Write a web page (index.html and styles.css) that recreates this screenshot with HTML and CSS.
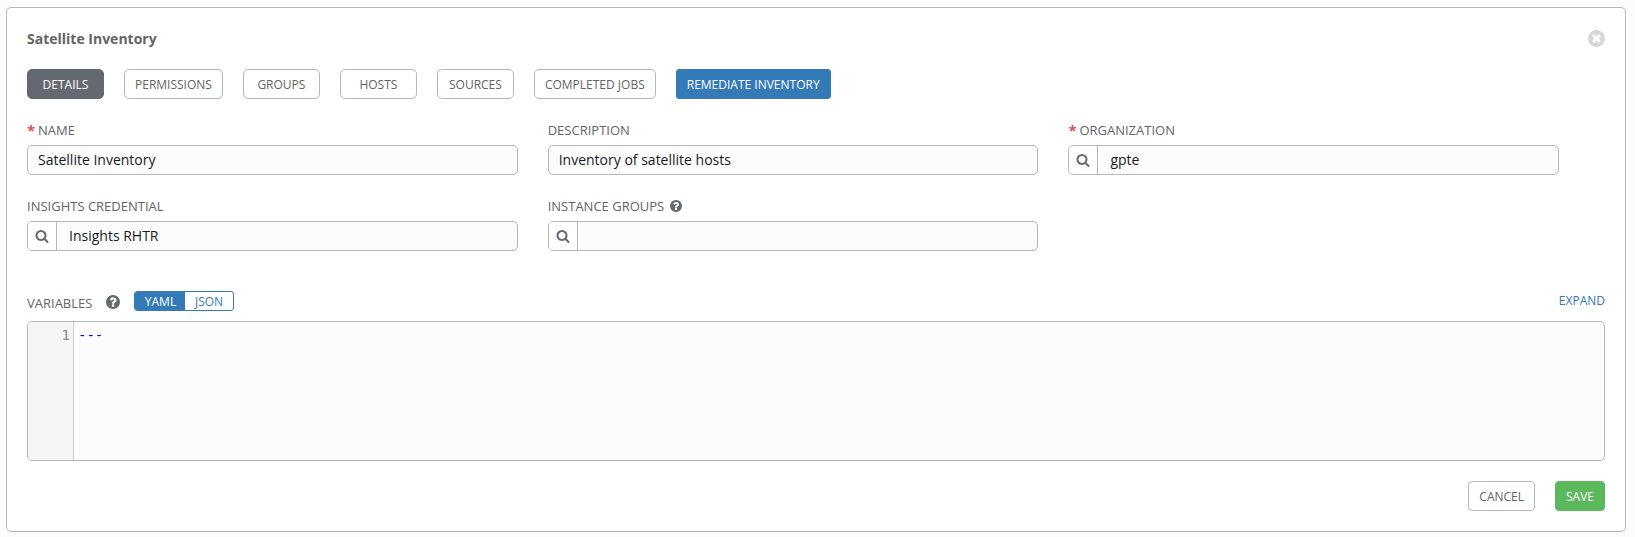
FILE: index.html
```
<!DOCTYPE html>
<html lang="en">
<head>
<meta charset="utf-8">
<title>Satellite Inventory</title>
<link rel="stylesheet" href="styles.css">
</head>
<body>
<svg class="sprite" aria-hidden="true">
  <symbol id="search" viewBox="0 0 1792 1792"><path d="M1216 832q0-185-131.500-316.500t-316.500-131.500-316.500 131.500-131.500 316.500 131.500 316.500 316.500 131.500 316.500-131.500 131.500-316.500zm512 832q0 52-38 90t-90 38q-54 0-90-38l-343-342q-179 124-399 124-143 0-273.500-55.500t-225-150-150-225-55.500-273.500 55.500-273.500 150-225 225-150 273.500-55.500 273.500 55.500 225 150 150 225 55.500 273.500q0 220-124 399l343 343q37 37 37 90z"/></symbol>
  <symbol id="help" viewBox="128 128 1536 1536"><path d="M1024 1376v-192q0-14-9-23t-23-9h-192q-14 0-23 9t-9 23v192q0 14 9 23t23 9h192q14 0 23-9t9-23zm256-672q0-88-55.500-163t-138.500-116-170-41q-243 0-371 213-15 24 8 42l132 100q7 6 19 6 16 0 25-12 53-68 86-92 34-24 86-24 48 0 85.500 26t37.500 59q0 38-20 61t-68 45q-63 28-115.500 86.500t-52.500 125.500v36q0 14 9 23t23 9h192q14 0 23-9t9-23q0-19 21.500-49.500t54.500-49.500q32-18 49-28.500t46-35 44.500-48 28-60.500 12.500-81zm384 192q0 209-103 385.500t-279.500 279.500-385.500 103-385.500-103-279.500-279.500-103-385.500 103-385.500 279.500-279.500 385.500-103 385.500 103 279.500 279.500 103 385.500z"/></symbol>
  <symbol id="close" viewBox="128 128 1536 1536"><path d="M1277 1122q0-26-19-45l-181-181 181-181q19-19 19-45 0-27-19-46l-90-90q-19-19-46-19-26 0-45 19l-181 181-181-181q-19-19-45-19-27 0-46 19l-90 90q-19 19-19 46 0 26 19 45l181 181-181 181q-19 19-19 45 0 27 19 46l90 90q19 19 46 19 26 0 45-19l181-181 181 181q19 19 45 19 27 0 46-19l90-90q19-19 19-46zm387-226q0 209-103 385.500t-279.500 279.500-385.500 103-385.500-103-279.500-279.500-103-385.500 103-385.500 279.500-279.500 385.500-103 385.500 103 279.500 279.500 103 385.500z"/></symbol>
</svg>
<main class="panel">
  <header class="header">
    <h1 class="title">Satellite Inventory</h1>
    <svg class="close"><use href="#close"/></svg>
  </header>
  <nav class="tabs">
    <button class="btn tab active">DETAILS</button>
    <button class="btn tab">PERMISSIONS</button>
    <button class="btn tab">GROUPS</button>
    <button class="btn tab">HOSTS</button>
    <button class="btn tab">SOURCES</button>
    <button class="btn tab">COMPLETED JOBS</button>
    <button class="btn remediate">REMEDIATE INVENTORY</button>
  </nav>
  <section class="form">
    <div class="field">
      <div class="label"><span class="required">*</span>NAME</div>
      <div class="input"><span class="value">Satellite Inventory</span></div>
    </div>
    <div class="field">
      <div class="label">DESCRIPTION</div>
      <div class="input"><span class="value">Inventory of satellite hosts</span></div>
    </div>
    <div class="field">
      <div class="label"><span class="required">*</span>ORGANIZATION</div>
      <div class="input"><span class="lookup"><svg class="search"><use href="#search"/></svg></span><span class="value indent">gpte</span></div>
    </div>
    <div class="field">
      <div class="label">INSIGHTS CREDENTIAL</div>
      <div class="input"><span class="lookup"><svg class="search"><use href="#search"/></svg></span><span class="value indent">Insights RHTR</span></div>
    </div>
    <div class="field">
      <div class="label">INSTANCE GROUPS<svg class="help small"><use href="#help"/></svg></div>
      <div class="input"><span class="lookup"><svg class="search"><use href="#search"/></svg></span></div>
    </div>
  </section>
  <div class="variables">
    <span class="variables-label">VARIABLES</span>
    <svg class="help"><use href="#help"/></svg>
    <div class="toggle"><span class="option on">YAML</span><span class="option">JSON</span></div>
    <a class="expand">EXPAND</a>
  </div>
  <div class="editor">
    <div class="gutter">1</div>
    <div class="code">---</div>
  </div>
  <footer class="actions">
    <button class="btn cancel">CANCEL</button>
    <button class="btn save">SAVE</button>
  </footer>
</main>
</body>
</html>
```
FILE: styles.css
```
* { box-sizing: border-box; }
body {
  margin: 0;
  padding: 7px 9px 5px 6px;
  background: #fcfcfc;
  font-family: "Open Sans", "Noto Sans", sans-serif;
  font-size: 14px;
  color: #161b1f;
}
.sprite { display: none; }
.panel {
  height: 525px;
  padding: 19px 20px;
  background: #fff;
  border: 1px solid #b7b7b7;
  border-radius: 5px;
}
.header {
  display: flex;
  justify-content: space-between;
  align-items: center;
  height: 24px;
}
.title {
  margin: 0;
  font-size: 14px;
  line-height: 20px;
  font-weight: 700;
  color: #646464;
}
.close { width: 17px; height: 17px; margin-bottom: 1px; fill: #d7d7d7; }
.tabs { display: flex; gap: 20px; margin-top: 18px; }
.btn {
  height: 30px;
  padding: 2px 10px 0;
  border: 1px solid #b7b7b7;
  border-radius: 5px;
  background: #fff;
  color: #646464;
  font-family: inherit;
  font-size: 12px;
  line-height: 26px;
  white-space: nowrap;
}
.tab { min-width: 77px; }
.active { background: #646972; border-color: #646972; color: #fff; }
.remediate { background: #337ab7; border-color: #337ab7; color: #fff; border-radius: 3px; }
.form {
  display: grid;
  grid-template-columns: repeat(3, 490.700px);
  column-gap: 30px;
  row-gap: 20px;
  margin-top: 20px;
}
.label {
  display: flex;
  align-items: center;
  height: 22px;
  margin-bottom: 4px;
  font-size: 13px;
  line-height: 20px;
  color: #646464;
}
.required { width: 11px; font-size: 15px; font-weight: 700; color: #d9534f; }
.input {
  display: flex;
  height: 30px;
  border: 1px solid #b7b7b7;
  border-radius: 5px;
  background: #fcfcfc;
  overflow: hidden;
}
.value { padding-left: 10px; line-height: 28px; }
.indent { padding-left: 12px; }
.lookup {
  display: flex;
  align-items: center;
  justify-content: center;
  width: 29px;
  background: #fff;
  border-right: 1px solid #b7b7b7;
}
.search { width: 14px; height: 14px; fill: #646972; }
.help { width: 14px; height: 14px; fill: #646972; }
.small { width: 12px; height: 12px; margin: 0 0 1px 5.500px; }
.variables {
  display: flex;
  align-items: flex-start;
  height: 30px;
  margin-top: 40px;
  color: #646464;
  font-size: 13px;
  line-height: 20px;
}
.variables-label { width: 78.500px; padding-top: 2px; }
.variables .help { margin-top: 4px; }
.toggle {
  display: flex;
  width: 100px;
  height: 20px;
  margin-left: 14.500px;
  border: 1px solid #337ab7;
  border-radius: 3px;
  overflow: hidden;
}
.option {
  flex: 1;
  font-size: 12px;
  line-height: 19px;
  text-align: center;
  color: #337ab7;
}
.on { flex: 0 0 50px; padding-left: 1px; background: #337ab7; color: #fff; }
.expand { margin-left: auto; font-size: 12px; line-height: 19px; color: #337ab7; }
.editor {
  display: flex;
  height: 140px;
  border: 1px solid #b7b7b7;
  border-radius: 5px;
  background: #fcfcfc;
  overflow: hidden;
  font: 14px/20px "DejaVu Sans Mono", monospace;
}
.gutter {
  width: 46px;
  padding: 3px;
  border-right: 1px solid #ccc;
  background: #f6f6f6;
  color: #848992;
  text-align: right;
}
.code { padding: 3px 4px; color: #00e; }
.actions { display: flex; justify-content: flex-end; gap: 20px; margin-top: 20px; }
.cancel { border-radius: 4px; }
.save { background: #5cb85c; border-color: #5cb85c; color: #fff; border-radius: 4px; }
```
